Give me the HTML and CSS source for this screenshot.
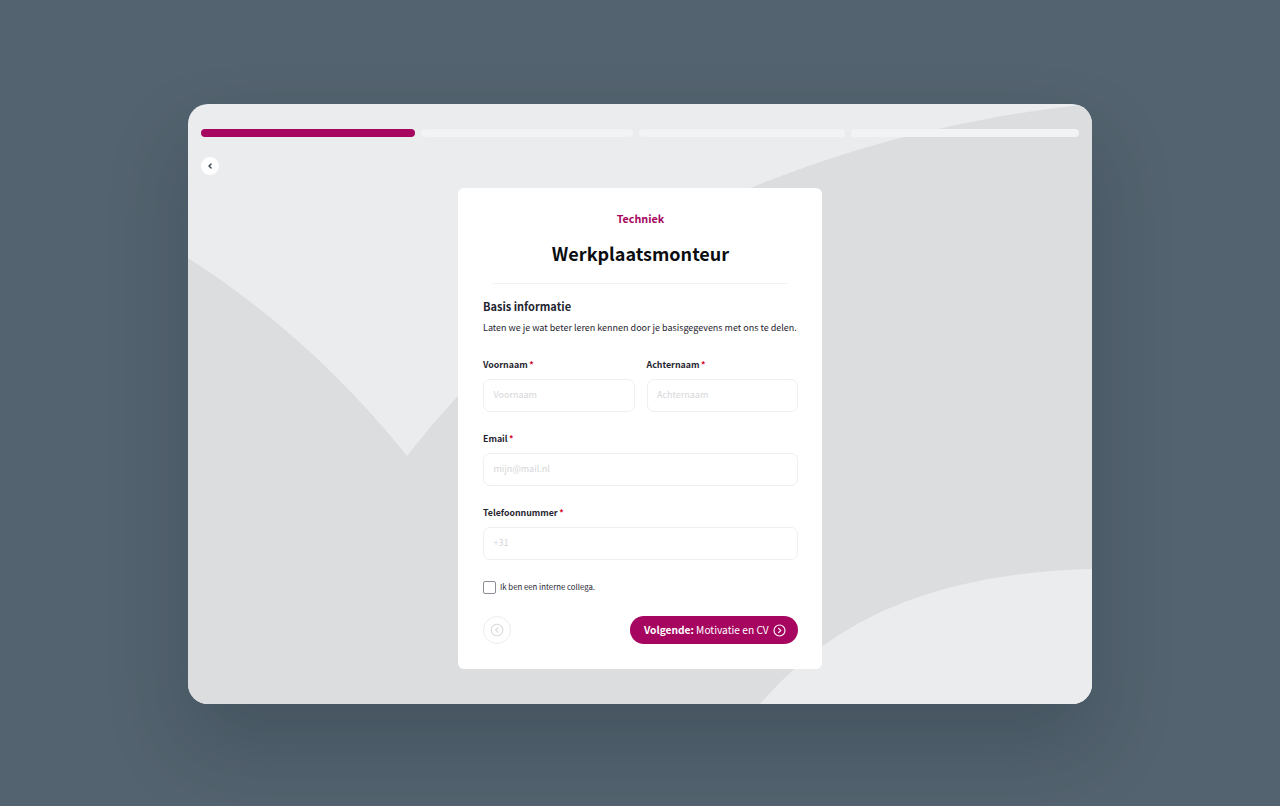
FILE: index.html
```html
<!DOCTYPE html>
<html lang="nl">
<head>
<meta charset="utf-8">
<title>Werkplaatsmonteur</title>
<link rel="stylesheet" href="styles.css">
</head>
<body>
<main class="panel">
  <svg class="backdrop" viewBox="0 0 904 600" preserveAspectRatio="none" aria-hidden="true">
    <path class="shape-dark" d="M0 154C80 205 155 272 219 352C320 225 430 135 565 83C665 42 780 12 904 0V600H0Z"/>
    <path class="shape-light" d="M572 600C620 545 675 510 740 490C790 474 850 466 904 465V600Z"/>
  </svg>
  <div class="progress">
    <span class="seg seg-1 is-active"></span>
    <span class="seg seg-2"></span>
    <span class="seg seg-3"></span>
    <span class="seg seg-4"></span>
  </div>
  <button class="back-top" type="button" aria-label="Terug">
    <svg viewBox="0 0 8 8" width="8" height="8"><path d="M5.1 2 3 4l2.1 2" fill="none" stroke="#3a434c" stroke-width="1.4" stroke-linecap="round" stroke-linejoin="round"/></svg>
  </button>
  <form class="card">
    <p class="category">Techniek</p>
    <h1 class="title">Werkplaatsmonteur</h1>
    <hr class="divider">
    <h2 class="section">Basis informatie</h2>
    <p class="intro">Laten we je wat beter leren kennen door je basisgegevens met ons te delen.</p>
    <div class="row">
      <div class="field">
        <label class="label">Voornaam<span class="req">*</span></label>
        <div class="input">Voornaam</div>
      </div>
      <div class="field">
        <label class="label">Achternaam<span class="req">*</span></label>
        <div class="input">Achternaam</div>
      </div>
    </div>
    <div class="field">
      <label class="label">Email<span class="req">*</span></label>
      <div class="input">mijn@mail.nl</div>
    </div>
    <div class="field">
      <label class="label">Telefoonnummer<span class="req">*</span></label>
      <div class="input">+31</div>
    </div>
    <div class="check">
      <span class="box"></span>
      <span class="check-text">Ik ben een interne collega.</span>
    </div>
    <div class="actions">
      <button class="prev" type="button" aria-label="Vorige">
        <svg viewBox="0 0 14 14" width="14" height="14"><circle cx="7" cy="7" r="5.8" fill="none" stroke="#d9dadd" stroke-width="1.1"/><path d="M8 4.6 5.6 7 8 9.4" fill="none" stroke="#d9dadd" stroke-width="1.1" stroke-linecap="round" stroke-linejoin="round"/></svg>
      </button>
      <button class="next" type="button">
        <span class="next-text"><b>Volgende:</b> Motivatie en CV</span>
        <svg viewBox="0 0 14 14" width="13" height="13"><circle cx="7" cy="7" r="5.9" fill="none" stroke="#fff" stroke-width="1.2"/><path d="M6 4.6 8.4 7 6 9.4" fill="none" stroke="#fff" stroke-width="1.2" stroke-linecap="round" stroke-linejoin="round"/></svg>
      </button>
    </div>
  </form>
</main>
</body>
</html>
```
FILE: styles.css
```css
* { box-sizing: border-box; }
html, body { height: 100%; }
body {
  margin: 0;
  padding-top: 104px;
  overflow: hidden;
  background: #53636f;
  font-family: "Noto Sans CJK SC", "Noto Sans", sans-serif;
  color: #1f2530;
}
.panel {
  position: relative;
  width: 904px;
  height: 600px;
  margin: 0 auto;
  padding: 25px 13px 0;
  border-radius: 20px;
  overflow: hidden;
  background: #ebecee;
  box-shadow: 0 40px 80px rgba(20, 30, 40, 0.22);
}
.backdrop {
  position: absolute;
  inset: 0;
  width: 100%;
  height: 100%;
}
.shape-dark { fill: #dcdddf; }
.shape-light { fill: #ebecee; }
.progress {
  position: relative;
  display: flex;
  gap: 6px;
  height: 8px;
}
.seg {
  border-radius: 4px;
  background: #f2f3f4;
}
.seg-1 { width: 214px; }
.seg-2 { width: 212px; }
.seg-3 { width: 206px; }
.seg-4 { width: 228px; }
.is-active { background: #a60560; }
.back-top {
  position: relative;
  display: flex;
  align-items: center;
  justify-content: center;
  width: 18px;
  height: 18px;
  margin-top: 20px;
  padding: 0;
  border: 0;
  border-radius: 50%;
  background: #fff;
}
.card {
  position: relative;
  width: 364px;
  height: 481px;
  margin: 13px auto 0;
  padding: 22px 24px 0 25px;
  border-radius: 6px;
  background: #fff;
}
.category {
  margin: 0;
  height: 18px;
  font-size: 10.8px;
  line-height: 17px;
  font-weight: 700;
  text-align: center;
  color: #a60560;
}
.title {
  margin: 11px 0 0;
  height: 28px;
  font-size: 18px;
  line-height: 28px;
  font-weight: 700;
  text-align: center;
  color: #0b0d10;
}
.divider {
  height: 1px;
  margin: 16px 10px 0;
  border: 0;
  background: #f3f3f4;
}
.section {
  margin: 13px 0 0;
  height: 18px;
  font-size: 11px;
  line-height: 18px;
  font-weight: 700;
}
.intro {
  margin: 5px 0 0;
  height: 16px;
  font-size: 9px;
  line-height: 16px;
  white-space: nowrap;
}
.row {
  display: grid;
  grid-template-columns: 151.5px 151.5px;
  gap: 12px;
}
.field { margin-top: 20px; }
.row .field { margin-top: 22px; }
.label {
  display: block;
  height: 14px;
  font-size: 8.8px;
  line-height: 14px;
  font-weight: 700;
}
.req {
  margin-left: 1.5px;
  color: #d4002a;
}
.input {
  height: 33px;
  margin-top: 7px;
  padding-left: 9.5px;
  border: 1.5px solid #eeeff0;
  border-radius: 7px;
  background: #fff;
  font-size: 9px;
  line-height: 30px;
  color: #d5d6d9;
}
.check {
  display: flex;
  align-items: center;
  gap: 4px;
  margin-top: 21px;
}
.box {
  width: 13px;
  height: 13px;
  border: 1px solid #8a8f95;
  border-radius: 2px;
  background: #fff;
}
.check-text {
  font-size: 7.8px;
  line-height: 12px;
  height: 13px;
}
.actions {
  display: flex;
  justify-content: space-between;
  margin-top: 22px;
}
.prev {
  display: flex;
  align-items: center;
  justify-content: center;
  width: 28px;
  height: 28px;
  padding: 0;
  border: 1px solid #ededee;
  border-radius: 50%;
  background: #fff;
}
.next {
  display: flex;
  align-items: center;
  justify-content: space-between;
  width: 168px;
  height: 28px;
  padding: 0 12px 0 14px;
  border: 0;
  border-radius: 14px;
  background: #a60560;
  color: #fff;
  font-family: inherit;
}
.next-text {
  font-size: 10.2px;
  line-height: 28px;
  white-space: nowrap;
}
```
